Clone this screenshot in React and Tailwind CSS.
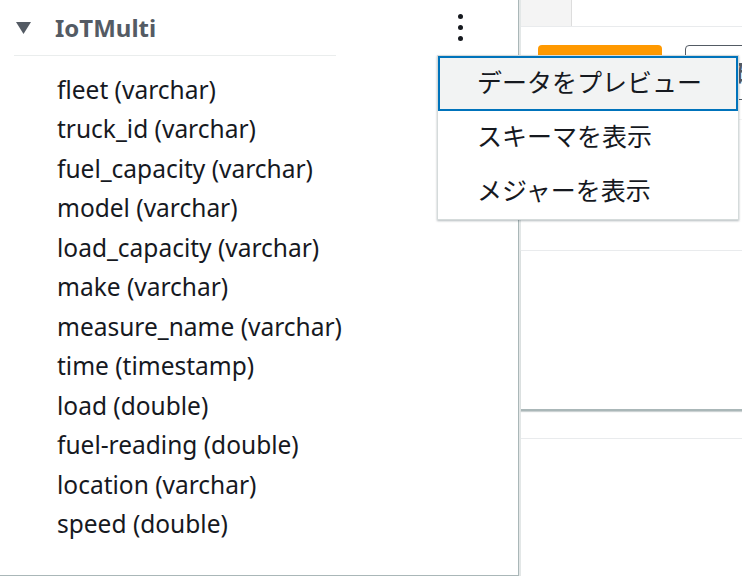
import React from 'react';

const columns = [
  'fleet (varchar)',
  'truck_id (varchar)',
  'fuel_capacity (varchar)',
  'model (varchar)',
  'load_capacity (varchar)',
  'make (varchar)',
  'measure_name (varchar)',
  'time (timestamp)',
  'load (double)',
  'fuel-reading (double)',
  'location (varchar)',
  'speed (double)',
];

const menuItems = ['データをプレビュー', 'スキーマを表示', 'メジャーを表示'];

const font = { fontFamily: '"Noto Sans", "Noto Sans CJK JP", sans-serif' };

export default function App() {
  return (
    <div className="relative flex h-[576px] w-[742px] overflow-hidden bg-white text-[#16191f]" style={font}>
      {/* table tree panel */}
      <div className="w-[519px] shrink-0 h-[576px] border-r border-b border-[#aab7b8] bg-white">
        <div className="flex items-start">
          <div className="ml-[14px] w-[322px] h-[56px] border-b border-[#eaeded] flex items-center">
            <svg width="15" height="12" viewBox="0 0 15 12" className="ml-[2px] mt-[1px]">
              <polygon points="0,0 15,0 7.5,12" fill="#545b64" />
            </svg>
            <span className="ml-[24px] text-[24px] font-bold text-[#545b64] leading-none">IoTMulti</span>
          </div>
          <button className="ml-auto mr-[46px] w-[24px] h-[44px] flex flex-col items-center justify-center gap-[6px] mt-[5px]">
            <span className="block w-[5px] h-[5px] rounded-full bg-[#16191f]" />
            <span className="block w-[5px] h-[5px] rounded-full bg-[#16191f]" />
            <span className="block w-[5px] h-[5px] rounded-full bg-[#16191f]" />
          </button>
        </div>
        <ul className="pt-[14px] pl-[57px]">
          {columns.map(c => (
            <li key={c} className="h-[39.5px] flex items-center text-[24.5px] leading-none whitespace-nowrap">
              {c}
            </li>
          ))}
        </ul>
      </div>

      {/* main area behind the menu */}
      <div className="flex-1 border-l-2 border-[#e3e7e7] flex flex-col">
        <div className="flex h-[27px] border-b border-[#e9ebed]">
          <div className="w-[51px] bg-[#f4f4f4] border-r border-[#dddddd]" />
        </div>
        <div className="flex pt-[18px] pl-[17px] gap-[23px]">
          <div className="w-[124px] h-[55px] rounded-[4px] bg-[#ff9900]" />
          <div className="w-[80px] h-[55px] rounded-[4px] border border-[#545b64] flex items-center pl-[50px] text-[24px] font-bold text-[#545b64] whitespace-nowrap overflow-hidden">
            確認
          </div>
        </div>
        <div className="mt-[19px] border-t border-[#f2f3f3] h-[131px]" />
        <div className="border-t border-[#e9ebed] h-[161px] border-b-2 border-b-[#aab7b8] shadow-[0_1px_1px_rgba(0,28,36,0.2)]" />
        <div className="mt-[27px] border-t border-[#e9ebed]" />
      </div>

      {/* actions dropdown */}
      <div className="absolute left-[437px] top-[55px] w-[302px] bg-white border border-[#d5dbdb] shadow-[0_1px_2px_rgba(0,28,36,0.3)]">
        {menuItems.map((m, i) => (
          <div
            key={m}
            className={
              i === 0
                ? 'h-[55px] flex items-center pl-[37px] pb-[3px] text-[25px] leading-none bg-[#f2f3f3] border-2 border-[#0073bb]'
                : 'h-[54px] flex items-center pl-[39px] pb-[4px] text-[25px] leading-none'
            }
          >
            {m}
          </div>
        ))}
      </div>
    </div>
  );
}
